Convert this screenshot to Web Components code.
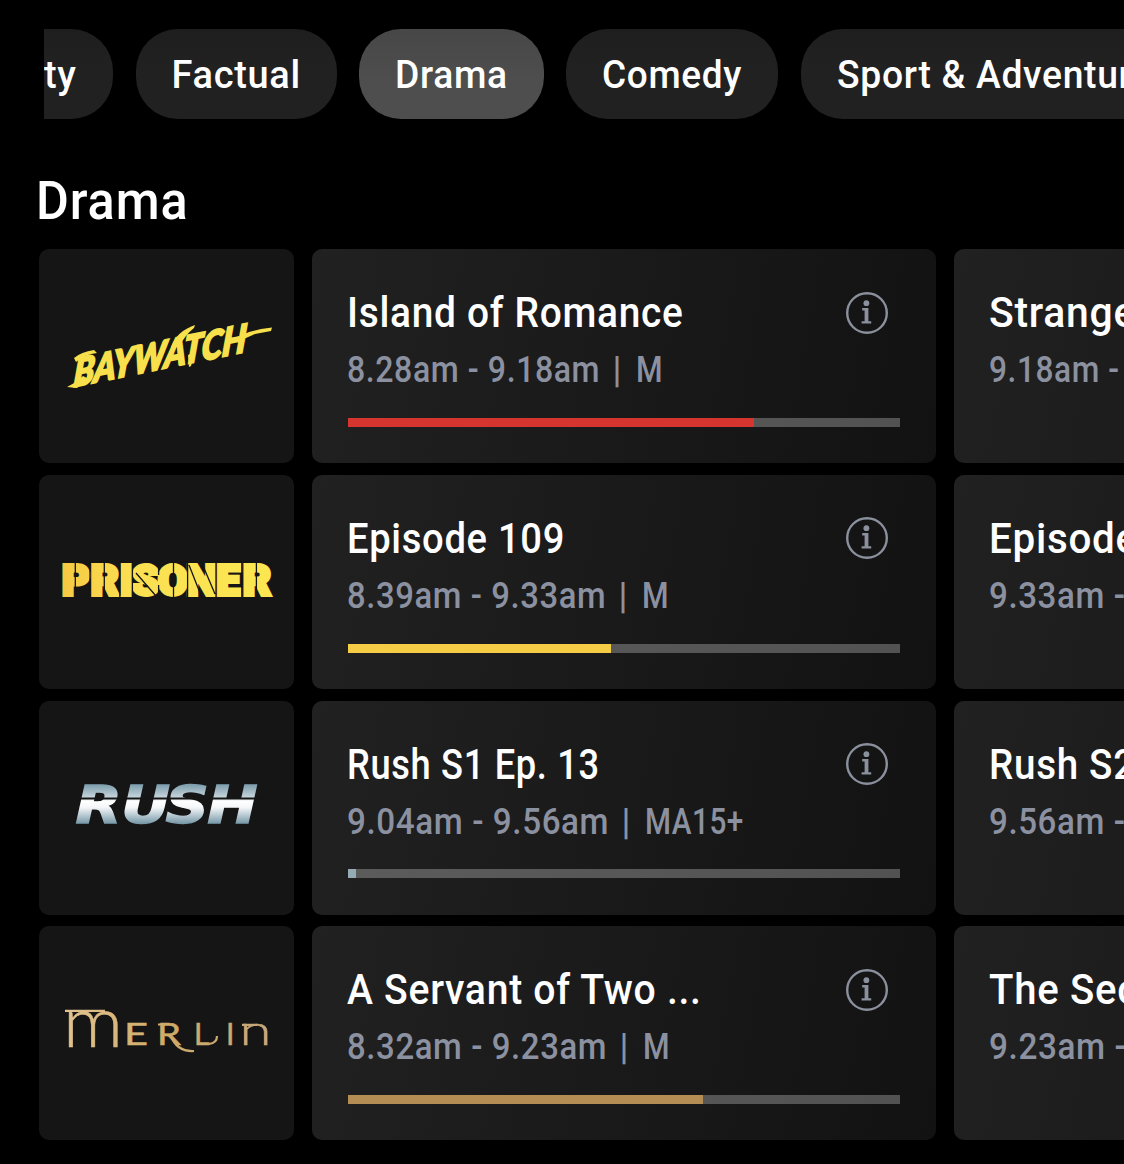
<!DOCTYPE html>
<html lang="en">
<head>
<meta charset="utf-8">
<title>TV Guide</title>
<style>
  body {
    margin: 0;
    background: #000;
    color: #fff;
    font-family: Roboto, "Liberation Sans", sans-serif;
    font-weight: 500;
    overflow: hidden;
  }
</style>
</head>
<body>
<guide-page>
  <genre-strip slot="genres">
    <genre-chip cut fit="33">ty</genre-chip>
    <genre-chip fit="129">Factual</genre-chip>
    <genre-chip fit="112.8" selected>Drama</genre-chip>
    <genre-chip fit="140">Comedy</genre-chip>
    <genre-chip fit="316">Sport &amp; Adventure</genre-chip>
  </genre-strip>
  <fit-line slot="heading" width="152">Drama</fit-line>

  <channel-row>
    <svg slot="logo" width="255" height="214" viewBox="0 0 255 214" role="img" aria-label="Baywatch">
      <g fill="#f7e04b" stroke="#f7e04b">
        <text transform="translate(34 138) rotate(-11.5) skewX(-16)" font-family="Lato" font-weight="900" font-style="italic" font-size="38" stroke-width="2" textLength="176" lengthAdjust="spacingAndGlyphs">BAYWATCH</text>
        <path stroke="none" d="M196 89L210 83L222 80L233 78.5L232 82L216 85L198 93ZM28 138L37 133L44 127L50 130L38 139ZM132 98Q138 82 156 76L155 79Q146 86 140 98ZM35 109Q42 103 55 101L58 104Q46 105 37 113ZM149 106L156 103L152 117L150 118Z"/>
      </g>
    </svg>
    <programme-card heading="Island of Romance" time="8.28am - 9.18am" rating="M" progress="406" color="#d6342f" fit-heading="337" fit-time="253" fit-rating="27"></programme-card>
    <programme-card heading="Strange" time="9.18am -" fit-heading="147" fit-time="131"></programme-card>
  </channel-row>

  <channel-row>
    <svg slot="logo" width="255" height="214" viewBox="0 0 255 214" role="img" aria-label="Prisoner">
      <defs>
        <linearGradient id="prisoner-fill">
          <stop offset="0" stop-color="#f5ca43"/>
          <stop offset=".35" stop-color="#fbe052"/>
          <stop offset="1" stop-color="#fbe751"/>
        </linearGradient>
      </defs>
      <text x="37 65.7 87.2 106.4 133.8 162.7 189.5 218" y="120.2" text-anchor="middle" font-family="Roboto" font-weight="900" font-size="43" fill="url(#prisoner-fill)" stroke="url(#prisoner-fill)" stroke-width="3.8">PRISONER</text>
      <path fill="none" stroke="#151515" stroke-width="1.3" d="M36.3 86V123M51 86V123M65.3 86V123M80.8 86V123M93.4 86V123M119.6 86V100M119.6 110V123M134.5 86V123M148.6 86V123M177 86V123M202.8 86V123M217.4 86V123M97 98L117 121M150 90L163 123M162 86L176 119"/>
    </svg>
    <programme-card heading="Episode 109" time="8.39am - 9.33am" rating="M" progress="263" color="#f6cb45" fit-heading="218" fit-time="259" fit-rating="27"></programme-card>
    <programme-card heading="Episode" time="9.33am -" fit-heading="149" fit-time="137"></programme-card>
  </channel-row>

  <channel-row>
    <svg slot="logo" width="255" height="214" viewBox="0 0 255 214" role="img" aria-label="Rush">
      <defs>
        <linearGradient id="rush-fill" gradientUnits="userSpaceOnUse" x1="0" y1="84" x2="0" y2="123">
          <stop offset="0" stop-color="#7f9fae"/>
          <stop offset=".3" stop-color="#c3d2d9"/>
          <stop offset=".42" stop-color="#fff"/>
          <stop offset=".58" stop-color="#f3f6f8"/>
          <stop offset="1" stop-color="#7395a5"/>
        </linearGradient>
      </defs>
      <text transform="scale(1.18 1)" x="50.5 90.5 125.5 164" y="122.5" text-anchor="middle" font-family="DejaVu Sans" font-weight="700" font-style="italic" font-size="51" fill="url(#rush-fill)" stroke="url(#rush-fill)" stroke-width="1.4">RUSH</text>
      <path stroke="#151515" stroke-width="2" d="M36 97.6H226"/>
    </svg>
    <programme-card heading="Rush S1 Ep. 13" time="9.04am - 9.56am" rating="MA15+" progress="8" color="#96acb5" fit-heading="253" fit-time="262" fit-rating="99"></programme-card>
    <programme-card heading="Rush S2" time="9.56am -" fit-heading="147" fit-time="137"></programme-card>
  </channel-row>

  <channel-row>
    <svg slot="logo" width="255" height="214" viewBox="0 0 255 214" role="img" aria-label="Merlin">
      <defs>
        <linearGradient id="merlin-fill" gradientUnits="userSpaceOnUse" x1="26" y1="84" x2="230" y2="122">
          <stop offset="0" stop-color="#e2c391"/>
          <stop offset=".5" stop-color="#cfab68"/>
          <stop offset="1" stop-color="#c5a77b"/>
        </linearGradient>
      </defs>
      <text fill="url(#merlin-fill)" stroke="url(#merlin-fill)" stroke-width=".5" font-family="Lato" font-weight="400" font-size="30"><tspan x="24" y="121" font-size="70" font-weight="300" textLength="60" lengthAdjust="spacingAndGlyphs">m</tspan><tspan x="85" y="119" textLength="24" lengthAdjust="spacingAndGlyphs">E</tspan><tspan x="118" y="119" textLength="24" lengthAdjust="spacingAndGlyphs">R</tspan><tspan x="155" y="119">L</tspan><tspan x="187" y="119">I</tspan><tspan x="200.5" y="119" font-size="41" font-weight="300" textLength="32" lengthAdjust="spacingAndGlyphs">n</tspan></text>
      <path fill="none" stroke="url(#merlin-fill)" stroke-width="2.2" d="M26 84.8H66M132 110Q138 126 155 125M170 118Q178 117 178 110M119 98.5H126M203 98.8H218"/>
    </svg>
    <programme-card heading="A Servant of Two ..." time="8.32am - 9.23am" rating="M" progress="355" color="#b48d55" fit-heading="355" fit-time="260" fit-rating="27"></programme-card>
    <programme-card heading="The Sec" time="9.23am -" fit-heading="150" fit-time="138"></programme-card>
  </channel-row>
</guide-page>

<script>
class GuidePage extends HTMLElement {
  constructor() {
    super();
    this.attachShadow({ mode: 'open' });
    this.shadowRoot.innerHTML = `
      <style>
        :host {
          display: block;
          box-sizing: border-box;
          width: 1124px;
          height: 1164px;
          padding-top: 29px;
          overflow: hidden;
        }
        h1 {
          margin: 52px 0 18px 36px;
          font-size: 53px;
          font-weight: 500;
          line-height: 60px;
        }
        .rows {
          display: flex;
          flex-direction: column;
          gap: 11.76px;
          padding-left: 39px;
        }
      </style>
      <slot name="genres"></slot>
      <h1><slot name="heading"></slot></h1>
      <div class="rows"><slot></slot></div>
    `;
  }
}

// One line of text, condensed or widened to the width it is given
class FitLine extends HTMLElement {
  constructor() {
    super();
    this.attachShadow({ mode: 'open' });
    this.shadowRoot.innerHTML = `
      <style>
        :host {
          display: block;
          white-space: nowrap;
        }
        .line {
          display: inline-block;
          vertical-align: top;
          letter-spacing: 0.018em;
          transform-origin: 0 50%;
        }
      </style>
      <span class="line"><slot></slot></span>
    `;
  }

  connectedCallback() {
    const width = Number(this.getAttribute('width'));
    const line = this.shadowRoot.querySelector('.line');
    this.style.width = `${width}px`;
    line.style.transform = `scaleX(${width / line.offsetWidth})`;
  }
}

class GenreStrip extends HTMLElement {
  constructor() {
    super();
    this.attachShadow({ mode: 'open' });
    this.shadowRoot.innerHTML = `
      <style>
        :host {
          display: flex;
          gap: 22.5px;
          margin-left: 44px;
          overflow: hidden;
        }
      </style>
      <slot></slot>
    `;
  }
}

class GenreChip extends HTMLElement {
  constructor() {
    super();
    this.attachShadow({ mode: 'open' });
  }

  connectedCallback() {
    this.shadowRoot.innerHTML = `
      <style>
        :host {
          display: block;
          flex: none;
          box-sizing: border-box;
          height: 90px;
          padding: 1px 36px 0;
          border-radius: 42px;
          background: linear-gradient(#1e1e1e, #212121 40%);
          font-size: 38px;
          line-height: 90px;
        }
        :host([selected]) {
          background: linear-gradient(#474747, #4e4e4e 60%);
        }
        :host([cut]) {
          padding-left: 0;
          border-radius: 0 42px 42px 0;
        }
      </style>
      <fit-line width="${this.getAttribute('fit')}"><slot></slot></fit-line>
    `;
  }
}

class ChannelRow extends HTMLElement {
  constructor() {
    super();
    this.attachShadow({ mode: 'open' });
    this.shadowRoot.innerHTML = `
      <style>
        :host {
          display: flex;
          gap: 18px;
          height: 214px;
        }
        .logo {
          flex: none;
          width: 255px;
          height: 214px;
          border-radius: 10px;
          background: #151515;
        }
        ::slotted(svg) {
          display: block;
        }
      </style>
      <div class="logo"><slot name="logo"></slot></div>
      <slot></slot>
    `;
  }
}

class InfoIcon extends HTMLElement {
  constructor() {
    super();
    this.attachShadow({ mode: 'open' });
    this.shadowRoot.innerHTML = `
      <style>
        :host {
          display: block;
          width: 42px;
          height: 42px;
          color: #8b909d;
        }
        svg {
          display: block;
        }
      </style>
      <svg width="42" height="42" viewBox="0 0 42 42" fill="none" stroke="currentColor">
        <circle cx="21" cy="21" r="19.8" stroke-width="2.4"/>
        <circle cx="20.4" cy="11.2" r="2.9" fill="currentColor" stroke="none"/>
        <path stroke-width="3.8" d="M20.5 16V31"/>
        <path stroke-width="2.4" d="M16.2 17.2H21M15.6 30.4H25.2"/>
      </svg>
    `;
  }
}

class ProgrammeCard extends HTMLElement {
  constructor() {
    super();
    this.attachShadow({ mode: 'open' });
  }

  connectedCallback() {
    const rating = this.getAttribute('rating');
    const progress = this.getAttribute('progress');
    this.shadowRoot.innerHTML = `
      <style>
        :host {
          display: block;
          flex: none;
          box-sizing: border-box;
          width: 624px;
          height: 214px;
          padding: 39px 36px 0;
          border-radius: 10px;
          background: linear-gradient(100deg, #212121, #121212);
        }
        .top {
          display: flex;
          justify-content: space-between;
          height: 50px;
          margin: 0 12px 0 -1px;
          font-size: 42px;
          line-height: 50px;
        }
        info-icon {
          margin-top: 3.7px;
        }
        .meta {
          display: flex;
          gap: 13px;
          margin: 10px 0 0 -1.5px;
          color: #8b91a0;
          font-size: 36px;
          line-height: 44px;
        }
        .track {
          height: 9px;
          margin-top: 25.8px;
          background: rgba(255, 255, 255, 0.27);
        }
        .bar {
          width: ${progress}px;
          height: 9px;
          background: ${this.getAttribute('color')};
        }
      </style>
      <div class="top">
        <fit-line width="${this.getAttribute('fit-heading')}">${this.getAttribute('heading')}</fit-line>
        ${progress ? '<info-icon></info-icon>' : ''}
      </div>
      <div class="meta">
        <fit-line width="${this.getAttribute('fit-time')}">${this.getAttribute('time')}</fit-line>
        ${rating ? `
          <fit-line width="10">|</fit-line>
          <fit-line width="${this.getAttribute('fit-rating')}">${rating}</fit-line>
        ` : ''}
      </div>
      ${progress ? '<div class="track"><div class="bar"></div></div>' : ''}
    `;
  }
}

customElements.define('guide-page', GuidePage);
customElements.define('genre-strip', GenreStrip);
customElements.define('genre-chip', GenreChip);
customElements.define('channel-row', ChannelRow);
customElements.define('info-icon', InfoIcon);
customElements.define('programme-card', ProgrammeCard);
// Last, as it measures text that the other elements have already laid out
customElements.define('fit-line', FitLine);
</script>
</body>
</html>
